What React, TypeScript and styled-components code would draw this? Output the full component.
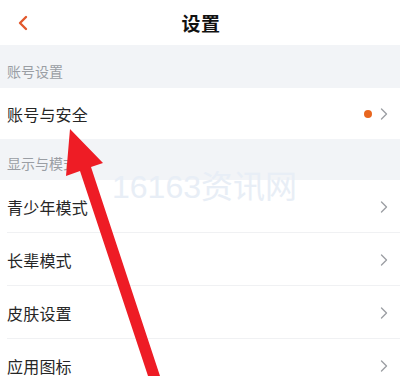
import React from "react";
import styled, { createGlobalStyle } from "styled-components";

const GlobalStyle = createGlobalStyle`
  html, body {
    margin: 0;
    padding: 0;
    background: #ffffff;
  }
  body {
    font-family: "Noto Sans CJK SC", "Noto Sans", sans-serif;
  }
`;

const Page = styled.div`
  position: relative;
  width: 400px;
  height: 376px;
  overflow: hidden;
  background: #ffffff;
`;

const Header = styled.header`
  height: 45px;
  display: flex;
  align-items: center;
  justify-content: center;
  position: relative;
  background: #ffffff;
`;

const BackButton = styled.button`
  position: absolute;
  left: 12px;
  top: 10px;
  width: 22px;
  height: 26px;
  padding: 0;
  border: none;
  background: transparent;
  display: flex;
  align-items: center;
  justify-content: center;
`;

const Title = styled.h1`
  margin: 0 0 0 2px;
  font-size: 19px;
  font-weight: 700;
  color: #111111;
  letter-spacing: 0.5px;
`;

const SectionLabel = styled.div<{ $height: number }>`
  height: ${({ $height }) => $height}px;
  background: #f2f4f7;
  display: flex;
  align-items: flex-end;
  padding: 0 0 7px 7px;
  box-sizing: border-box;
  font-size: 14px;
  line-height: 20px;
  color: #9a9ea4;
`;

const Row = styled.div<{ $height: number; $divider: boolean }>`
  height: ${({ $height }) => $height}px;
  display: flex;
  align-items: center;
  padding: 0 12px 0 7px;
  box-sizing: border-box;
  background: #ffffff;
  position: relative;
  &::after {
    content: "";
    display: ${({ $divider }) => ($divider ? "block" : "none")};
    position: absolute;
    left: 7px;
    right: 0;
    bottom: 0;
    height: 1px;
    background: #f0f1f3;
  }
`;

const RowText = styled.span`
  flex: 1;
  font-size: 16px;
  color: #262626;
  letter-spacing: 0.2px;
`;

const Dot = styled.span`
  width: 8px;
  height: 8px;
  border-radius: 50%;
  background: #e8661f;
  margin-right: 8px;
`;

const Watermark = styled.div`
  position: absolute;
  left: 112px;
  top: 170px;
  font-family: "Liberation Sans", "Noto Sans CJK SC", sans-serif;
  font-size: 32px;
  line-height: 34px;
  color: #e8eef6;
  letter-spacing: 0px;
  pointer-events: none;
`;

const ArrowLayer = styled.svg`
  position: absolute;
  left: 0;
  top: 0;
  pointer-events: none;
`;

const Chevron = () => (
  <svg width="8" height="12" viewBox="0 0 8 12">
    <path d="M1.5 1 L6.5 6 L1.5 11" fill="none" stroke="#9c9fa4" strokeWidth="1.4" strokeLinecap="round" strokeLinejoin="round" />
  </svg>
);

const rows = [
  { text: "青少年模式" },
  { text: "长辈模式" },
  { text: "皮肤设置" },
  { text: "应用图标" },
];

export default function App() {
  return (
    <Page>
      <GlobalStyle />
      <Header>
        <BackButton>
          <svg width="12" height="16" viewBox="0 0 12 16">
            <path d="M9 2 L3 8 L9 14" fill="none" stroke="#e2582c" strokeWidth="2.4" strokeLinecap="round" strokeLinejoin="round" />
          </svg>
        </BackButton>
        <Title>设置</Title>
      </Header>
      <SectionLabel $height={43}>账号设置</SectionLabel>
      <Row $height={51} $divider={false}>
        <RowText>账号与安全</RowText>
        <Dot />
        <Chevron />
      </Row>
      <SectionLabel $height={41}>显示与模式</SectionLabel>
      {rows.map((r, i) => (
        <Row key={r.text} $height={53} $divider={i < rows.length - 1}>
          <RowText>{r.text}</RowText>
          <Chevron />
        </Row>
      ))}
      <Watermark>16163资讯网</Watermark>
      <ArrowLayer width="400" height="376" viewBox="0 0 400 376">
        <polygon points="70,129 103,163 91,167 160,376 148,376 80,171 66,176" fill="#ee1c25" />
      </ArrowLayer>
    </Page>
  );
}
